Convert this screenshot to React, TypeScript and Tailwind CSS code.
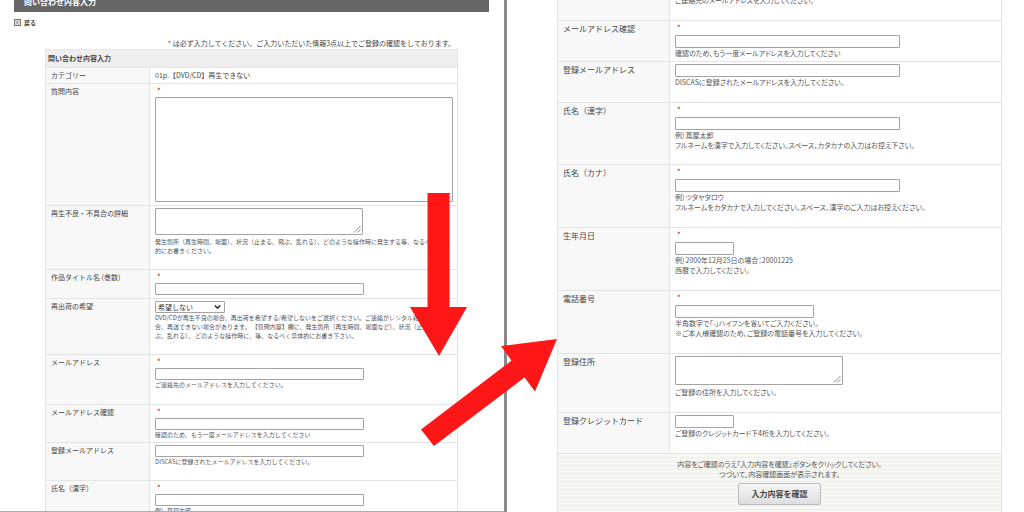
import clsx from 'clsx'

interface Field {
  id: string
  label: string
  kind: 'input' | 'textarea' | 'select' | 'text'
  height: string
  width?: string
  required?: boolean
  value?: string
  hints?: string[]
}

const leftFields: Field[] = [
  {
    id: 'category',
    label: 'カテゴリー',
    kind: 'text',
    height: 'h-[16px]',
    value: '01p.【DVD/CD】再生できない',
  },
  {
    id: 'question',
    label: '質問内容',
    kind: 'textarea',
    height: 'h-[122px]',
    width: 'w-[298px] h-[105px]',
    required: true,
  },
  {
    id: 'defect',
    label: '再生不良・不具合の詳細',
    kind: 'textarea',
    height: 'h-[64px]',
    width: 'w-[208px] h-[27px]',
    hints: [
      '発生箇所（再生時間、場面）、状況（止まる、飛ぶ、乱れる）、どのような操作時に発生する等、なるべく具体',
      '的にお書きください。',
    ],
  },
  {
    id: 'title',
    label: '作品タイトル名 (巻数)',
    kind: 'input',
    height: 'h-[29px]',
    width: 'w-[209px]',
    required: true,
  },
  {
    id: 'reship',
    label: '再出荷の希望',
    kind: 'select',
    height: 'h-[56px]',
    width: 'w-[70px]',
    value: '希望しない',
    hints: [
      'DVD/CDが再生不良の場合、再出荷を希望する/希望しないをご選択ください。ご連絡がレンタル終了後の場',
      '合、再送できない場合があります。 【質問内容】欄に、発生箇所（再生時間、場面など）、状況（止まる、飛',
      'ぶ、乱れる）、 どのような操作時に、等、なるべく具体的にお書き下さい。',
    ],
  },
  {
    id: 'mail',
    label: 'メールアドレス',
    kind: 'input',
    height: 'h-[50px]',
    width: 'w-[209px]',
    required: true,
    hints: ['ご連絡先のメールアドレスを入力してください。'],
  },
  {
    id: 'mail-confirm',
    label: 'メールアドレス確認',
    kind: 'input',
    height: 'h-[38px]',
    width: 'w-[209px]',
    required: true,
    hints: ['確認のため、もう一度メールアドレスを入力してください'],
  },
  {
    id: 'mail-registered',
    label: '登録メールアドレス',
    kind: 'input',
    height: 'h-[38px]',
    width: 'w-[209px]',
    hints: ['DISCASに登録されたメールアドレスを入力してください。'],
  },
  {
    id: 'name',
    label: '氏名（漢字）',
    kind: 'input',
    height: 'h-[31px]',
    width: 'w-[209px]',
    required: true,
    hints: ['例）蔦屋太郎'],
  },
]

const rightFields: Field[] = [
  {
    id: 'mail-confirm',
    label: 'メールアドレス確認',
    kind: 'input',
    height: 'h-[41px]',
    width: 'w-[225px]',
    required: true,
    hints: ['確認のため、もう一度メールアドレスを入力してください'],
  },
  {
    id: 'mail-registered',
    label: '登録メールアドレス',
    kind: 'input',
    height: 'h-[41px]',
    width: 'w-[225px]',
    hints: ['DISCASに登録されたメールアドレスを入力してください。'],
  },
  {
    id: 'name',
    label: '氏名（漢字）',
    kind: 'input',
    height: 'h-[62px]',
    width: 'w-[225px]',
    required: true,
    hints: [
      '例）蔦屋太郎',
      'フルネームを漢字で入力してください。スペース、カタカナの入力はお控え下さい。',
    ],
  },
  {
    id: 'kana',
    label: '氏名（カナ）',
    kind: 'input',
    height: 'h-[63px]',
    width: 'w-[225px]',
    required: true,
    hints: [
      '例）ツタヤタロウ',
      'フルネームをカタカナで入力してください。スペース、漢字のご入力はお控えください。',
    ],
  },
  {
    id: 'birthday',
    label: '生年月日',
    kind: 'input',
    height: 'h-[63px]',
    width: 'w-[59px]',
    required: true,
    hints: ['例）2000年12月25日の場合：20001225', '西暦で入力してください。'],
  },
  {
    id: 'tel',
    label: '電話番号',
    kind: 'input',
    height: 'h-[63px]',
    width: 'w-[139px]',
    required: true,
    hints: [
      '半角数字で「-」ハイフンを省いてご入力ください。',
      '※ご本人様確認のため、ご登録の電話番号を入力してください。',
    ],
  },
  {
    id: 'address',
    label: '登録住所',
    kind: 'textarea',
    height: 'h-[59px]',
    width: 'w-[168px] h-[29px]',
    hints: ['ご登録の住所を入力してください。'],
  },
  {
    id: 'card',
    label: '登録クレジットカード',
    kind: 'input',
    height: 'h-[41px]',
    width: 'w-[59px]',
    hints: ['ご登録のクレジットカード下4桁を入力してください。'],
  },
]

const box = 'block max-w-full rounded-[1px] border border-[#a3a3a3] bg-white'

const Control = ({ field, id, large }: { field: Field; id: string; large?: boolean }) => {
  if (field.kind === 'text') {
    return <span>{field.value}</span>
  }
  if (field.kind === 'textarea') {
    return (
      <div className={clsx('relative max-w-full mb-0.5', field.width)}>
        <textarea id={id} className={clsx(box, 'w-full h-full resize-none')} />
        <svg
          className="absolute right-0.5 bottom-0.5 w-2 h-2"
          viewBox="0 0 8 8"
          stroke="#666"
          strokeWidth="0.8"
        >
          <path d="M1 7.5L7.5 1M4.5 7.5L7.5 4.5" />
        </svg>
      </div>
    )
  }
  if (field.kind === 'select') {
    return (
      <div className={clsx('relative', field.width)}>
        <select id={id} className={clsx(box, 'w-full h-3 appearance-none pl-0.5 text-[7px] leading-[10px] text-[#333]')}>
          <option>{field.value}</option>
        </select>
        <svg
          className="absolute right-1 top-[3px] w-[7px] h-[6px] pointer-events-none"
          viewBox="0 0 7 6"
          fill="none"
          stroke="#222"
          strokeWidth="1.4"
        >
          <path d="M0.8 1.4L3.5 4.2L6.2 1.4" />
        </svg>
      </div>
    )
  }
  return <input id={id} type="text" className={clsx(box, field.width, large ? 'h-[13px]' : 'h-3')} />
}

const FieldRow = ({ field, prefix, large }: { field: Field; prefix: string; large?: boolean }) => {
  const id = `${prefix}-${field.id}`
  return (
    <tr className="border-b border-[#e4e4e4] align-top">
      <th className="border-x border-[#e4e4e4] bg-[#f8f8f8] p-0 pl-[5px] pt-[3px] text-left font-normal whitespace-nowrap">
        {field.kind === 'text' ? field.label : <label htmlFor={id}>{field.label}</label>}
      </th>
      <td className="border-r border-[#e4e4e4] p-0">
        <div
          className={clsx(
            'overflow-hidden pl-[5px] pr-1 -mb-px',
            field.kind === 'text' ? 'pt-[3px]' : 'pt-0.5',
            field.height
          )}
        >
          {field.required && (
            <div className={clsx('pl-0.5 text-[8px] text-[#d00]', large ? 'h-3' : 'h-[11px]')}>*</div>
          )}
          <Control field={field} id={id} large={large} />
          {field.hints?.map((hint) => (
            <p
              key={hint}
              className={clsx(
                'whitespace-nowrap text-[#555]',
                large
                  ? "text-[7px] leading-[10px] [font-feature-settings:'palt']"
                  : 'text-[6px] leading-[9px]'
              )}
            >
              {hint}
            </p>
          ))}
        </div>
      </td>
    </tr>
  )
}

const LeftPane = () => (
  <section className="overflow-hidden border-b border-[#8fd04a] text-[7px] leading-[9px]">
    <div className="ml-3.5 mr-[15px] h-3 overflow-hidden bg-[#666] pl-2.5">
      <h1 className="-mt-[3px] text-[8px] leading-[10px] font-bold text-white">問い合わせ内容入力</h1>
    </div>
    <a href="#" className="ml-3.5 mt-1.5 flex w-fit items-center gap-[3px] text-[6px] font-bold text-[#444]">
      <svg className="w-[7px] h-[7px]" viewBox="0 0 7 7" fill="none" stroke="#777">
        <rect x="0.5" y="0.5" width="6" height="6" fill="#ddd" />
        <path d="M4.5 1.8L2.6 3.5L4.5 5.2" />
      </svg>
      戻る
    </a>
    <p className="mt-3 mr-[49px] mb-px text-right">
      <span className="text-[#d00]">*</span>{' '}
      は必ず入力してください。ご入力いただいた情報3点以上でご登録の確認をしております。
    </p>
    <div className="ml-[45px] mr-[46px]">
      <table className="w-full table-fixed border-collapse">
        <colgroup>
          <col className="w-[104px]" />
          <col />
        </colgroup>
        <thead>
          <tr className="h-[18px] border border-[#e4e4e4] bg-[#efefef]">
            <th colSpan={2} className="p-0 pl-0.5 text-left font-bold">
              問い合わせ内容入力
            </th>
          </tr>
        </thead>
        <tbody>
          {leftFields.map((field) => (
            <FieldRow key={field.id} field={field} prefix="top" />
          ))}
        </tbody>
      </table>
    </div>
  </section>
)

const RightPane = () => (
  <section className="overflow-hidden pl-[50px] pr-[22px] text-[8px] leading-[10px]">
    <table className="w-full table-fixed border-collapse">
      <colgroup>
        <col className="w-[112px]" />
        <col />
      </colgroup>
      <tbody>
        <tr className="h-5 border-b border-[#e4e4e4] align-top">
          <th className="border-x border-[#e4e4e4] bg-[#f8f8f8] p-0" />
          <td className="border-r border-[#e4e4e4] p-0 pl-[5px]">
            <p className="-mt-[5px] text-[7px] leading-[10px] text-[#555] [font-feature-settings:'palt']">
              ご連絡先のメールアドレスを入力してください。
            </p>
          </td>
        </tr>
        {rightFields.map((field) => (
          <FieldRow key={field.id} field={field} prefix="bottom" large />
        ))}
      </tbody>
    </table>
    <div className="border-x border-[#e4e4e4] bg-[repeating-linear-gradient(#f7f8f3_0px,#f7f8f3_3px,#edf0e6_3px,#edf0e6_4px)] pt-[5px] pb-2 text-center">
      <p className="text-[7px] leading-[10px] text-[#555] [font-feature-settings:'palt']">
        内容をご確認のうえ「入力内容を確認」ボタンをクリックしてください。
        <br />
        つづいて、内容確認画面が表示されます。
      </p>
      <button
        type="button"
        className="mt-1 h-[22px] w-[83px] rounded-[2px] border border-[#bbb] bg-linear-to-b from-[#f6f6f6] to-[#dedede] text-[8px] font-bold text-[#444]"
      >
        入力内容を確認
      </button>
    </div>
  </section>
)

const App = () => {
  return (
    <main className="relative h-screen overflow-hidden bg-white font-['Noto_Sans_CJK_JP',sans-serif] text-[#444]">
      <form className="grid h-full grid-cols-[504fr_3px_517fr] grid-rows-[minmax(0,1fr)]">
        <LeftPane />
        <div className="bg-[#8a8a8a]" />
        <RightPane />
      </form>
      <svg
        className="absolute inset-0 w-full h-full pointer-events-none"
        viewBox="0 0 1024 512"
        fill="#ff1616"
      >
        <path d="M427.5 193H449.5V307H467L439 356L410 307H427.5Z" />
        <path d="M421 429.5L511.5 360.5L501 346L557 339L535 391.5L524.5 377.5L434 446Z" />
      </svg>
    </main>
  )
}

export default App
